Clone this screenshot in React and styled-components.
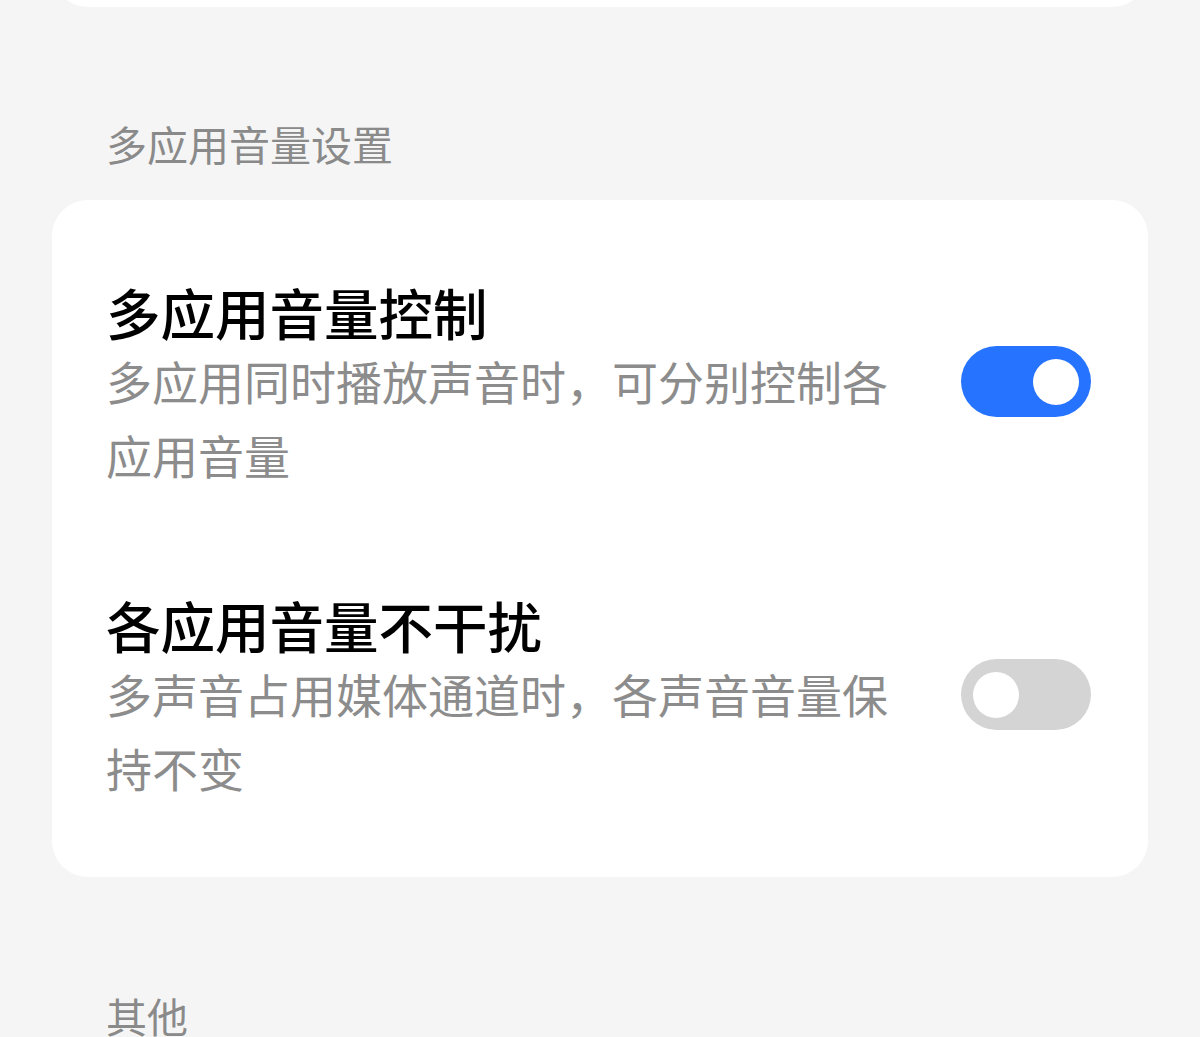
import React, { useState } from "react";
import styled, { createGlobalStyle } from "styled-components";

const GlobalStyle = createGlobalStyle`
    html, body {
        margin: 0;
        padding: 0;
        background-color: #F5F5F5;
        font-family: "Noto Sans CJK SC", "Noto Sans", sans-serif;
        overflow: hidden;
    }
`;

const settings = [
    {
        id: "multi",
        title: "多应用音量控制",
        description: "多应用同时播放声音时，可分别控制各应用音量",
        on: true
    },
    {
        id: "keep",
        title: "各应用音量不干扰",
        description: "多声音占用媒体通道时，各声音音量保持不变",
        on: false
    }
];

export default function App() {
    const [values, setValues] = useState(
        Object.fromEntries(settings.map(s => [s.id, s.on]))
    );

    function toggle(id) {
        setValues({ ...values, [id]: !values[id] });
    }

    return (
        <>
            <GlobalStyle />
            <Page>
                <PrevCard />

                <SectionTitle>多应用音量设置</SectionTitle>
                <Card>
                    {settings.map((s, i) => (
                        <Row key={s.id} first={i === 0}>
                            <TextBlock>
                                <Title>{s.title}</Title>
                                <Description>{s.description}</Description>
                            </TextBlock>
                            <Switch on={values[s.id]} onClick={() => toggle(s.id)}>
                                <Knob on={values[s.id]} />
                            </Switch>
                        </Row>
                    ))}
                </Card>

                <SectionTitle spaced>其他</SectionTitle>
            </Page>
        </>
    );
}

const Page = styled.div`
    display: flex;
    flex-direction: column;

    padding: 0 52px;
    min-height: 100vh;
`;

const PrevCard = styled.div`
    height: 100px;
    margin-top: -93px;

    border-radius: 36px;
    background-color: #FFFFFF;
`;

const SectionTitle = styled.h3`
    margin: ${props => (props.spaced ? "110px" : "108px")} 0 29px 54px;

    font-size: 41px;
    font-weight: 400;
    line-height: 56px;
    color: #8A8A8A;
`;

const Card = styled.div`
    display: flex;
    flex-direction: column;

    padding: 81px 57px 73px 54px;

    border-radius: 36px;
    background-color: #FFFFFF;
`;

const Row = styled.div`
    display: flex;
    justify-content: space-between;
    align-items: flex-start;
    gap: 50px;

    margin-top: ${props => (props.first ? "0" : "103px")};
`;

const TextBlock = styled.div`
    display: flex;
    flex-direction: column;
    flex: 1;
`;

const Title = styled.p`
    margin: 0;

    font-size: 54.5px;
    font-weight: 500;
    line-height: 62px;
    color: #000000;
`;

const Description = styled.p`
    margin: 0;

    font-size: 46px;
    line-height: 74px;
    color: #8C8C8C;
`;

const Switch = styled.button`
    display: flex;
    align-items: center;
    justify-content: ${props => (props.on ? "flex-end" : "flex-start")};
    flex-shrink: 0;

    width: 130px;
    height: 71px;
    margin-top: 65px;
    padding: 0 12px;

    border: none;
    border-radius: 36px;
    background-color: ${props => (props.on ? "#2673FF" : "#D4D4D4")};
    cursor: pointer;
`;

const Knob = styled.span`
    width: 46px;
    height: 46px;

    border-radius: 50%;
    background-color: #FFFFFF;
`;
